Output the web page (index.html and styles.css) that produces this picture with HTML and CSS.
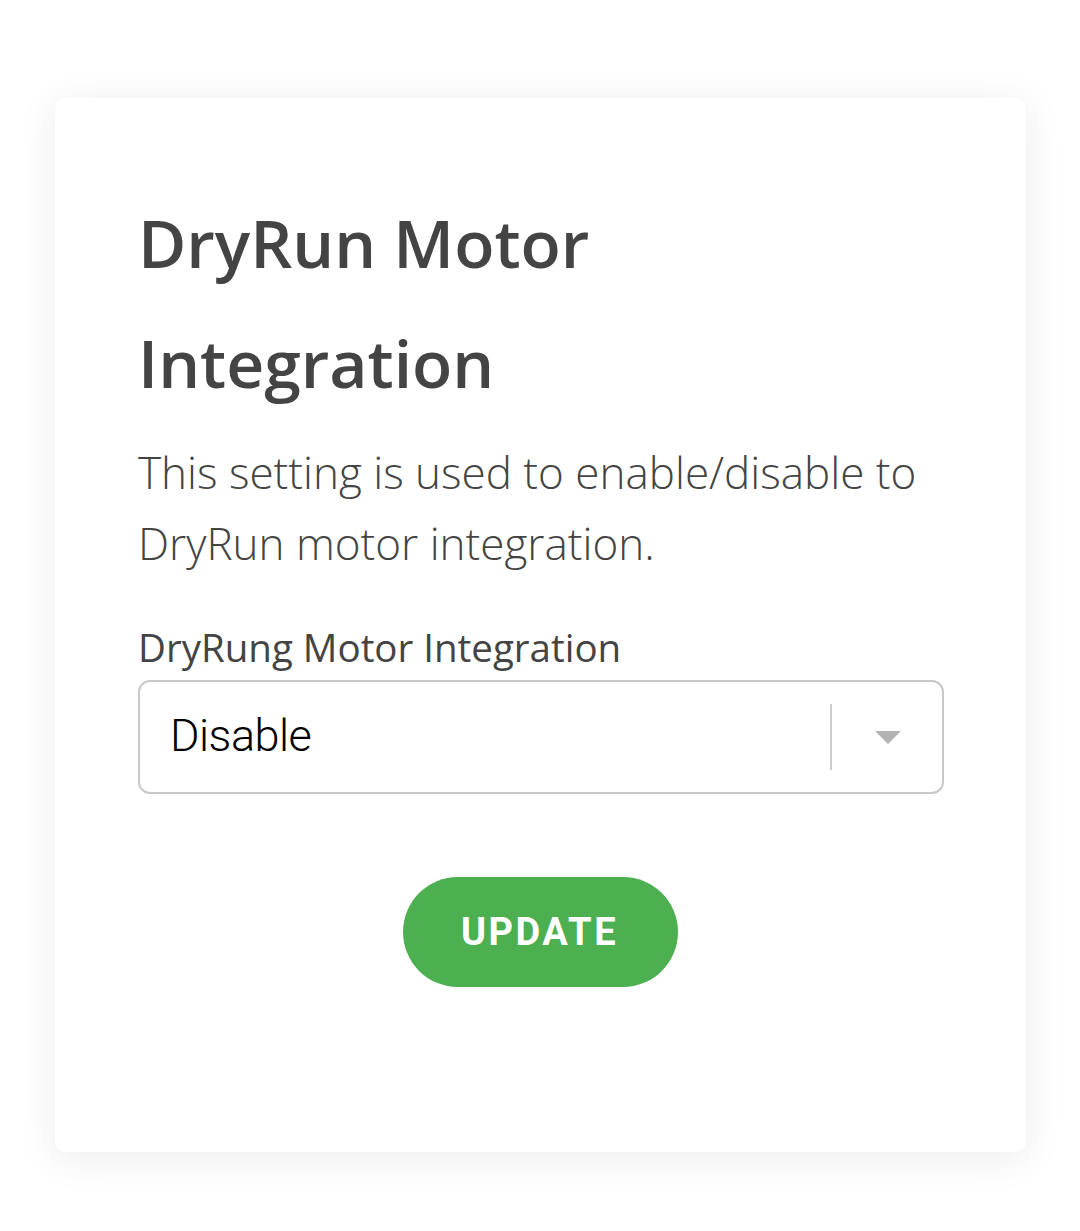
FILE: index.html
```html
<!DOCTYPE html>
<html>
<head>
<meta charset="utf-8">
<link rel="stylesheet" href="styles.css">
</head>
<body>
<div class="page">
  <div class="card">
    <h1 class="title">DryRun Motor Integration</h1>
    <p class="desc">This setting is used to enable/disable to DryRun motor integration.</p>
    <label class="label">DryRung Motor Integration</label>
    <div class="select">
      <span class="value">Disable</span>
      <span class="indicators">
        <span class="sep"></span>
        <svg class="arrow" width="26" height="13" viewBox="0 0 26 13"><path d="M0 0 L26 0 L13 13 Z" fill="#b3b3b3"/></svg>
      </span>
    </div>
    <div class="actions">
      <button class="btn">UPDATE</button>
    </div>
  </div>
</div>
</body>
</html>
```
FILE: styles.css
```css
html, body {
  margin: 0;
  padding: 0;
  background: #ffffff;
}
.page {
  padding: 98px 54px 79px 55px;
}
.card {
  background: #fff;
  border-radius: 10px;
  box-shadow: 0 6px 40px rgba(0,0,0,0.08);
  padding: 84px 82px 0 83px;
  height: 1054px;
  box-sizing: border-box;
}
.title {
  margin: 0;
  font-family: "Open Sans", sans-serif;
  font-weight: 600;
  font-size: 66px;
  line-height: 120px;
  color: #444444;
  width: 560px;
}
.desc {
  margin: 15px 0 0 0;
  font-family: "Open Sans", sans-serif;
  font-weight: 300;
  font-size: 44px;
  line-height: 71px;
  color: #444444;
}
.label {
  display: block;
  margin-top: 45px;
  font-family: "Open Sans", sans-serif;
  font-weight: 400;
  font-size: 38.5px;
  line-height: 46px;
  color: #444444;
}
.select {
  margin-top: 10px;
  height: 114px;
  box-sizing: border-box;
  border: 2px solid #c8c8c8;
  border-radius: 12px;
  display: flex;
  align-items: center;
  justify-content: space-between;
  padding-left: 30px;
}
.value {
  font-family: Roboto, sans-serif;
  font-weight: 300;
  font-size: 45px;
  letter-spacing: -0.5px;
  color: #000;
  margin-top: -3px;
}
.indicators {
  display: flex;
  align-items: center;
  height: 100%;
}
.sep {
  width: 2px;
  height: 66px;
  background: #cccccc;
}
.arrow {
  margin: 0 41px 0 43px;
}
.actions {
  display: flex;
  justify-content: center;
  margin-top: 83px;
  padding-right: 1px;
}
.btn {
  width: 275px;
  height: 110px;
  border: none;
  border-radius: 55px;
  background: #4caf50;
  color: #fff;
  font-family: Roboto, sans-serif;
  font-weight: 700;
  font-size: 38px;
  letter-spacing: 2.5px;
  padding: 0 2px 0 0;
}
```
